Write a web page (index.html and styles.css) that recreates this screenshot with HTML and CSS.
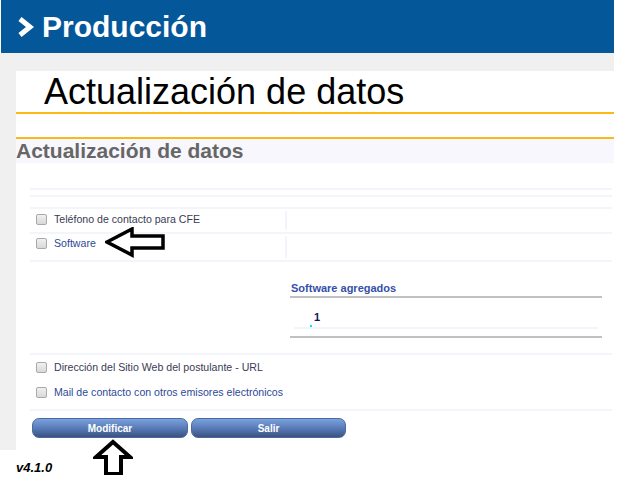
FILE: index.html
```html
<!DOCTYPE html>
<html lang="es">
<head>
    <meta charset="UTF-8">
    <meta name="viewport" content="width=device-width, initial-scale=1.0">
    <title>Actualización de datos - Producción</title>
    <link rel="stylesheet" href="styles.css">
</head>

<body>
    <div class="page">
        <header class="top">
            <svg class="chevron" width="18" height="24" viewBox="0 0 18 24">
                <polyline points="3,4 13,12 3,20" fill="none" stroke="#fff" stroke-width="5" stroke-linejoin="miter"/>
            </svg>
            <span class="top-title">Producción</span>
        </header>
        <div class="band"></div>

        <div class="main">
            <div class="gutter"></div>
            <div class="content">
                <div class="title-box">
                    <h1>Actualización de datos</h1>
                </div>
                <div class="section-head">
                    <h2>Actualización de datos</h2>
                </div>

                <div class="form">
                    <div class="line first"></div>
                    <div class="line second"></div>

                    <div class="row row-a">
                        <div class="cell-left">
                            <span class="check"></span>
                            <span class="label dark">Teléfono de contacto para CFE</span>
                        </div>
                        <div class="cell-right"></div>
                    </div>
                    <div class="row row-b">
                        <div class="cell-left">
                            <span class="check"></span>
                            <span class="label blue">Software</span>
                        </div>
                        <div class="cell-right"></div>
                    </div>

                    <div class="soft-row">
                        <div class="cell-left"></div>
                        <div class="soft-box">
                            <div class="soft-title">Software agregados</div>
                            <div class="soft-list">
                                <div class="soft-item"><span class="dot"></span><b>1</b></div>
                            </div>
                        </div>
                    </div>

                    <div class="row row-c">
                        <div class="cell-left">
                            <span class="check"></span>
                            <span class="label dark">Dirección del Sitio Web del postulante - URL</span>
                        </div>
                    </div>
                    <div class="row row-d">
                        <div class="cell-left">
                            <span class="check"></span>
                            <span class="label blue">Mail de contacto con otros emisores electrónicos</span>
                        </div>
                    </div>

                    <div class="buttons">
                        <button class="btn">Modificar</button>
                        <button class="btn">Salir</button>
                    </div>
                </div>
            </div>
        </div>

        <div class="version">v4.1.0</div>

        <!-- flechas marcadas encima de la captura -->
        <svg class="mark mark-left" width="62" height="32" viewBox="0 0 62 32">
            <polygon points="2,15 27,2 27,9 58,9 58,21 27,21 27,28" fill="#fff" stroke="#000" stroke-width="3.5" stroke-linejoin="miter"/>
        </svg>
        <svg class="mark mark-up" width="40" height="40" viewBox="0 0 40 40">
            <polygon points="20,3 37,18 28,18 28,35 13,35 13,18 3,18" fill="#fff" stroke="#000" stroke-width="4" stroke-linejoin="miter"/>
        </svg>
    </div>
</body>
</html>
```

FILE: styles.css
```css
* {
    margin: 0;
    padding: 0;
    box-sizing: border-box;
}

body {
    background: #fff;
    font-family: "Liberation Sans", Arial, sans-serif;
}

.page {
    width: 614px;
    position: relative;
}

.top {
    height: 53px;
    background: #04589a;
    display: flex;
    align-items: center;
    padding-left: 16px;
    margin-left: 1px;
}

.chevron {
    display: block;
    margin-right: 7px;
}

.top-title {
    color: #fff;
    font-size: 30px;
    font-weight: bold;
    line-height: 34px;
}

.band {
    height: 18px;
    background: #f0f0f0;
}

.main {
    display: flex;
}

.gutter {
    width: 16px;
    background: #f0f0f0;
}

.content {
    flex: 1;
    padding-bottom: 12px;
}

.title-box {
    height: 43px;
    border-bottom: 2px solid #fbb914;
}

.title-box h1 {
    font-size: 36px;
    font-weight: normal;
    line-height: 41px;
    color: #000;
    padding-left: 28px;
}

.section-head {
    margin-top: 23px;
    border-top: 2px solid #fbb914;
    background: #f7f7fd;
    height: 26px;
}

.section-head h2 {
    font-size: 21px;
    line-height: 24px;
    color: #666;
    font-weight: bold;
}

.form {
    margin: 0 2px 0 14px;
}

.line {
    height: 2px;
    background: #f4f4fb;
}

.line.first {
    margin-top: 25px;
}

.line.second {
    margin-top: 5px;
}

.row {
    display: flex;
    border-bottom: 2px solid #f4f4fb;
}

.row-a {
    margin-top: 10px;
    border-top: 2px solid #f4f4fb;
    height: 27px;
}

.row-b {
    height: 28px;
}

.row-c {
    height: 25px;
    border-bottom: none;
}

.row-d {
    height: 31px;
}

.cell-left {
    width: 255px;
    display: flex;
    align-items: center;
    align-self: flex-start;
    padding: 4px 0 0 6px;
    white-space: nowrap;
}

.row-b .cell-left {
    padding-top: 3px;
}

.row-c .cell-left,
.row-d .cell-left {
    padding-top: 6px;
}

.cell-right {
    flex: 1;
    border-left: 2px solid #f4f4fb;
    margin: 2px 0;
}

.check {
    width: 11px;
    height: 11px;
    border: 1px solid #a9a9a9;
    border-radius: 2px;
    background: linear-gradient(#f0f0f0, #d9d9d9);
    margin-right: 7px;
    flex-shrink: 0;
}

.label {
    font-size: 10.6px;
    line-height: 12px;
}

.label.dark {
    color: #3b3b55;
}

.label.blue {
    color: #2d4a94;
}

.soft-row {
    display: flex;
    height: 93px;
    border-bottom: 2px solid #f4f4fb;
}

.soft-box {
    width: 312px;
    margin-left: 5px;
    padding-top: 19px;
}

.soft-title {
    font-size: 11px;
    font-weight: bold;
    line-height: 15px;
    color: #3550a8;
    padding-left: 1px;
    border-bottom: 2px solid #c0c0c0;
}

.soft-list {
    border-bottom: 2px solid #c0c0c0;
    padding: 0 4px 7px;
}

.soft-item {
    height: 31px;
    border-bottom: 2px solid #f4f4fb;
    position: relative;
    padding: 14px 0 0 20px;
    font-size: 11px;
    line-height: 11px;
    color: #14145c;
}

.dot {
    position: absolute;
    left: 16px;
    top: 27px;
    width: 2px;
    height: 2px;
    background: #00e5ff;
}

.buttons {
    display: flex;
    gap: 3px;
    margin: 7px 0 0 2px;
}

.btn {
    width: 156px;
    height: 20px;
    border: 1px solid #4b69a3;
    border-radius: 7px;
    background: linear-gradient(#7aa2de, #5678b4 55%, #3b5282);
    color: #fff;
    font-family: "Liberation Sans", Arial, sans-serif;
    font-size: 10px;
    font-weight: bold;
    cursor: pointer;
}

.btn + .btn {
    width: 155px;
}

.version {
    padding: 10px 0 0 16px;
    font-size: 13px;
    font-weight: bold;
    font-style: italic;
    color: #000;
}

.mark {
    position: absolute;
}

.mark-left {
    left: 105px;
    top: 227px;
}

.mark-up {
    left: 93px;
    top: 439px;
}
```
